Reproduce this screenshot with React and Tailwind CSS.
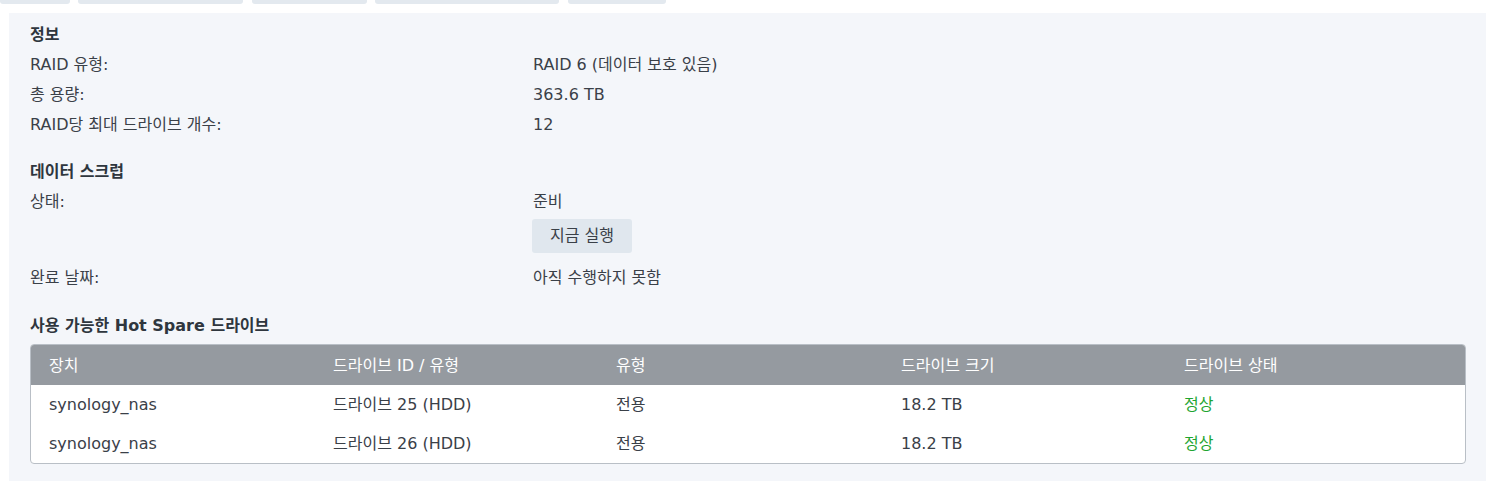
import React from "react";

const font = { fontFamily: '"DejaVu Sans", "Noto Sans CJK KR", sans-serif' };

function Row({ label, value }) {
  return (
    <div className="flex h-[30px] items-center">
      <div className="w-[503px]">{label}</div>
      <div>{value}</div>
    </div>
  );
}

function Heading({ children, className = "" }) {
  return <div className={`flex h-[31px] items-center font-bold text-[16px] text-[#2f363e] ${className}`}>{children}</div>;
}

const cols = ["w-[284px]", "w-[283px]", "w-[285px]", "w-[283px]", "flex-1"];

function TRow({ cells, header }) {
  return (
    <div className={`flex items-center px-[18px] pt-[1px] ${header ? "h-[40px] bg-[#959aa0] text-white" : "h-[39px] text-[#3a4048]"}`}>
      {cells.map((c, i) => (
        <div key={i} className={`${cols[i]} ${!header && i === 4 ? "text-[#1fa531]" : ""}`}>{c}</div>
      ))}
    </div>
  );
}

export default function App() {
  return (
    <div className="w-[1488px] h-[481px] bg-white relative text-[16px] text-[#3a4048]" style={font}>
      <div className="flex h-[4px] gap-0">
        <div className="ml-0 w-[70px] h-[4px] bg-[#e3e9ef] rounded-b-[3px]" />
        <div className="ml-[8px] w-[165px] h-[4px] bg-[#e3e9ef] rounded-b-[3px]" />
        <div className="ml-[9px] w-[115px] h-[4px] bg-[#e3e9ef] rounded-b-[3px]" />
        <div className="ml-[8px] w-[184px] h-[4px] bg-[#e3e9ef] rounded-b-[3px]" />
        <div className="ml-[9px] w-[98px] h-[4px] bg-[#e3e9ef] rounded-b-[3px]" />
      </div>
      <div className="ml-[9px] mt-[9px] w-[1477px] h-[468px] bg-[#f4f6fa] pl-[21px] pr-[20px] pt-[6px]">
        <Heading>정보</Heading>
        <Row label="RAID 유형:" value="RAID 6 (데이터 보호 있음)" />
        <Row label="총 용량:" value="363.6 TB" />
        <Row label="RAID당 최대 드라이브 개수:" value="12" />
        <Heading className="mt-[16px]">데이터 스크럽</Heading>
        <Row label="상태:" value="준비" />
        <div className="flex mt-[2px]">
          <div className="w-[502px]" />
          <button className="h-[34px] w-[100px] rounded-[3px] bg-[#e0e7ee] text-[#3a4048] text-[16px]" style={font}>지금 실행</button>
        </div>
        <div className="mt-[10px]">
          <Row label="완료 날짜:" value="아직 수행하지 못함" />
        </div>
        <Heading className="mt-[17px]">사용 가능한 Hot Spare 드라이브</Heading>
        <div className="mt-[3px] w-[1436px] rounded-[4px] border border-[#b9bfc6] bg-white overflow-hidden">
          <TRow header cells={["장치", "드라이브 ID / 유형", "유형", "드라이브 크기", "드라이브 상태"]} />
          <TRow cells={["synology_nas", "드라이브 25 (HDD)", "전용", "18.2 TB", "정상"]} />
          <TRow cells={["synology_nas", "드라이브 26 (HDD)", "전용", "18.2 TB", "정상"]} />
        </div>
      </div>
    </div>
  );
}
